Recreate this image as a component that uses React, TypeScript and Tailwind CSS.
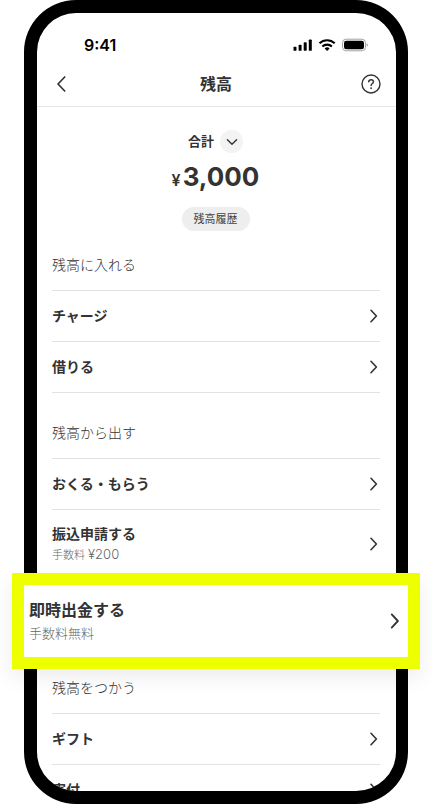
import { clsx } from 'clsx';

type Row = { label: string; note?: string; fee?: string };

type Section = { title: string; rows: Row[]; reserveHighlight?: boolean };

const SECTIONS: Section[] = [
  { title: '残高に入れる', rows: [{ label: 'チャージ' }, { label: '借りる' }] },
  {
    title: '残高から出す',
    rows: [{ label: 'おくる・もらう' }, { label: '振込申請する', note: '手数料', fee: '¥200' }],
    reserveHighlight: true,
  },
  { title: '残高をつかう', rows: [{ label: 'ギフト' }, { label: '寄付' }] },
];

function Chevron({ className }: { className?: string }) {
  return (
    <svg
      viewBox="0 0 10 14"
      fill="none"
      stroke="currentColor"
      strokeWidth="1.6"
      strokeLinecap="round"
      strokeLinejoin="round"
      className={clsx('shrink-0', className)}
      aria-hidden="true"
    >
      <path d="M3 1.3 8.4 7 3 12.7" />
    </svg>
  );
}

function StatusBar() {
  return (
    <div className="flex h-12 items-center justify-between pt-4 pr-7 pl-[47px] text-black">
      <span className="text-base leading-5 font-semibold">9:41</span>
      <svg width="76" height="14" viewBox="0 0 76 14" aria-label="電波状況とバッテリー" role="img">
        {/* Signal */}
        <g fill="currentColor">
          <rect x="1.5" y="8.7" width="3" height="4.1" rx="0.9" />
          <rect x="6.6" y="6.7" width="3" height="6.1" rx="0.9" />
          <rect x="11.7" y="4.2" width="3" height="8.6" rx="0.9" />
          <rect x="16.8" y="1.4" width="3" height="11.4" rx="0.9" />
        </g>
        {/* Wi-Fi */}
        <g fill="none" stroke="currentColor" strokeWidth="2.1">
          <path d="M27.5 5.3a11 11 0 0 1 15.2 0" />
          <path d="M30.3 8.5a7 7 0 0 1 9.6 0" />
        </g>
        <path d="M32.6 10.4a3.9 3.9 0 0 1 5 0l-2.5 2.7z" fill="currentColor" />
        {/* Battery */}
        <rect x="50.5" y="1.2" width="23" height="11.6" rx="3.6" fill="none" stroke="#a3a3a3" />
        <rect x="52" y="2.7" width="20" height="8.6" rx="2.3" fill="currentColor" />
        <path d="M74.7 5.2v3.6c.7-.3 1.2-1 1.2-1.8s-.5-1.5-1.2-1.8z" fill="#a3a3a3" />
      </svg>
    </div>
  );
}

function Header() {
  return (
    <header className="flex h-[46px] items-center justify-between border-b border-[#e6e6e6] pr-[15px] pl-4">
      <button type="button" aria-label="戻る" className="flex h-8 w-[18px] items-center">
        <svg width="14" height="18" viewBox="0 0 14 18" fill="none" stroke="currentColor" strokeWidth="1.7" strokeLinecap="round" strokeLinejoin="round">
          <path d="M11.7 2 5 9l6.7 7" />
        </svg>
      </button>
      <h1 className="text-base leading-6 font-semibold">残高</h1>
      <button type="button" aria-label="ヘルプ">
        <svg width="20" height="20" viewBox="0 0 20 20" fill="none" stroke="currentColor" strokeWidth="1.4" strokeLinecap="round" strokeLinejoin="round">
          <circle cx="10" cy="10" r="9" />
          <path d="M7.7 7.9c.1-1.4 1-2.2 2.4-2.2 1.3 0 2.3.8 2.3 2 0 1-.6 1.6-1.3 2.1-.7.5-1 .9-1 1.8" />
          <path d="M10.1 14.1v.1" strokeWidth="1.7" />
        </svg>
      </button>
    </header>
  );
}

function Balance() {
  return (
    <div className="flex flex-col items-center pt-[23px] pr-0.5">
      <div className="flex items-start gap-1.5">
        <span className="text-[13px] leading-[22px] font-semibold">合計</span>
        <button type="button" aria-label="内訳を開く" className="flex size-[23px] items-center justify-center rounded-full bg-[#f3f3f3]">
          <svg width="12" height="8" viewBox="0 0 12 8" fill="none" stroke="currentColor" strokeWidth="1.4" strokeLinecap="round" strokeLinejoin="round">
            <path d="M1.4 1.7 6 6.2l4.6-4.5" />
          </svg>
        </button>
      </div>
      <p className="flex h-[54px] items-baseline gap-0.5 pt-1.5">
        <span className="text-base font-semibold">¥</span>
        <span className="text-[26px] leading-9 font-bold">3,000</span>
      </p>
      <button type="button" className="h-6 rounded-full bg-[#eeeeee] px-3 text-[11px] leading-6 text-[#444444]">
        残高履歴
      </button>
    </div>
  );
}

function MenuSection({ title, rows, reserveHighlight }: Section) {
  return (
    <section className={clsx('pr-4 pl-[15px]', reserveHighlight ? 'pb-[100px]' : 'pb-[30px]')}>
      <h2 className="pb-[15px] text-sm leading-5 font-light text-[#333333]">{title}</h2>
      <ul>
        {rows.map((row, i) => (
          <li key={row.label} className={clsx('border-t border-[#e2e2e2]', !reserveHighlight && i === rows.length - 1 && 'border-b')}>
            <button type="button" className="flex min-h-[50px] w-full items-center justify-between pr-0.5 pb-px text-left">
              <span className={clsx(row.note && 'pt-3.5 pb-3')}>
                <span className="block text-sm leading-5 font-bold">{row.label}</span>
                {row.note && (
                  <span className="block text-[11px] leading-5 font-light text-[#666666]">
                    {row.note} <span className="text-[13px] leading-5">{row.fee}</span>
                  </span>
                )}
              </span>
              <Chevron className="h-3.5 w-2.5" />
            </button>
          </li>
        ))}
      </ul>
    </section>
  );
}

function HighlightedRow() {
  return (
    <div className="absolute inset-x-3 top-[573px] border-12 border-[#eeff00] bg-white shadow-[0_8px_20px_rgba(0,0,0,0.08)]">
      <button type="button" className="flex h-[72px] w-full items-center justify-between pr-2 pl-[5px] text-left">
        <span>
          <span className="block text-base leading-6 font-bold">即時出金する</span>
          <span className="block text-[13px] leading-[22px] font-light text-[#666666]">手数料無料</span>
        </span>
        <Chevron className="h-4 w-3" />
      </button>
    </div>
  );
}

export default function App() {
  return (
    <main className="relative h-dvh overflow-hidden bg-white px-6 font-[Inter,'Noto_Sans_CJK_JP',sans-serif] text-[#333333]">
      <div className="h-full overflow-hidden rounded-[52px] border-[13px] border-r-12 border-black bg-white">
        <StatusBar />
        <Header />
        <Balance />
        <div className="pt-6">
          {SECTIONS.map((section) => (
            <MenuSection key={section.title} {...section} />
          ))}
        </div>
      </div>
      <HighlightedRow />
    </main>
  );
}
